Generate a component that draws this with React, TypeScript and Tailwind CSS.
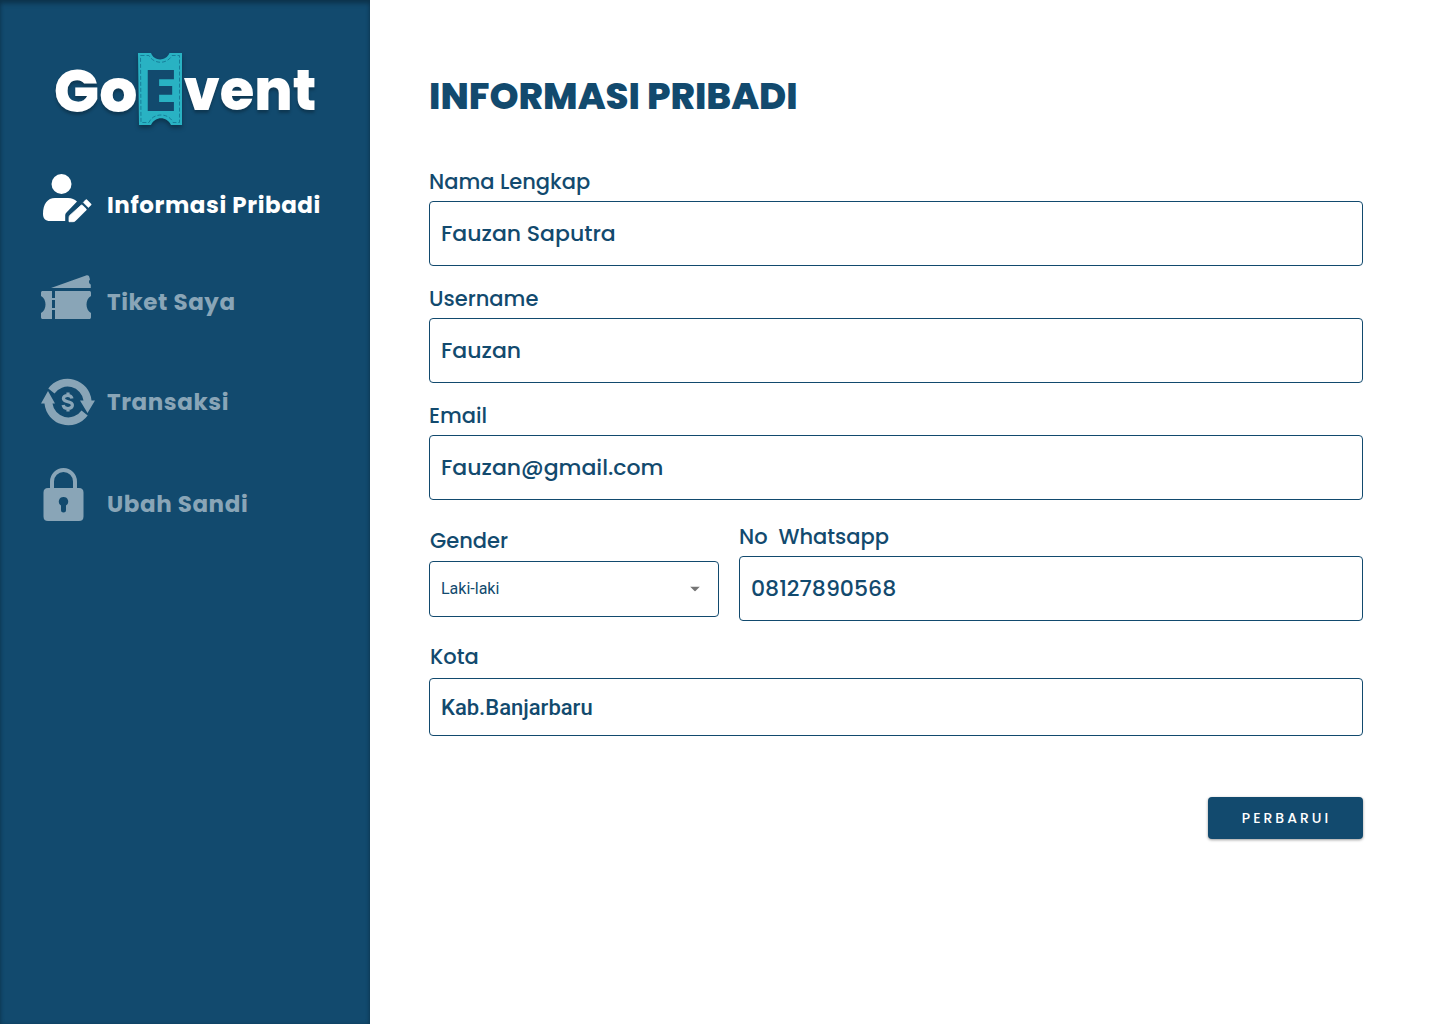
import type { ReactNode } from "react";

const fieldClass =
  "w-full rounded border border-[#124a6e] bg-white px-[11px] text-[22px] font-medium text-[#124a6e] outline-none";
const labelClass = "block text-[21px] font-medium whitespace-pre";

function Logo() {
  return (
    <a href="#" aria-label="GoEvent" className="mx-auto flex h-[76px] w-fit items-center leading-none font-extrabold text-white [text-shadow:0_3px_3px_rgba(0,0,0,0.25)]">
      <span className="pt-1 text-[60px]">Go</span>
      <span className="relative flex h-[76px] w-[46px] items-center justify-center">
        <svg viewBox="0 0 46 76" className="absolute inset-0 h-full w-full overflow-visible drop-shadow-[0_3px_2px_rgba(0,0,0,0.3)]" fill="none">
          <path d="M1 2h13c3 8.500 15 8.500 18.500 0H45v72H34c-4-9-16-9-20 0H2z" fill="#29b2c3" />
          <path d="M3.500 4.500H12c5 9 18 9 23 0h7.500V71.500H36c-4-10-20-10-24 0H4z" stroke="#167f9a" strokeDasharray="4 2" />
        </svg>
        <span className="relative pt-1 text-[58px] text-[#124a6e] [text-shadow:none]">E</span>
      </span>
      <span className="pt-1 text-[56px]">vent</span>
    </a>
  );
}

function UserEditIcon() {
  return (
    <svg width="54" height="50" viewBox="0 0 54 50" fill="currentColor" aria-hidden="true">
      <circle cx="21.500" cy="11" r="10" />
      <path d="M15 25h13c4 0 6.500 1.200 9 3.500L26.500 39.500c-1 1-1.300 1.800-1.300 3.500v5H10c-4.500 0-7-2.500-7-7C3 31 7.500 25 15 25z" />
      <path d="M41 32.300q.7-.6 1.400 0l3.600 3.500q.6.700 0 1.400L35.500 47.700q-1 1-2.500 1h-4v-4q0-1.500 1-2.500z" stroke="currentColor" strokeWidth=".8" />
      <path d="M43.300 29.500 45.500 27q.8-.8 1.600 0l3.700 3.700q.8.800 0 1.600L48.300 34.500z" stroke="currentColor" strokeWidth=".6" />
    </svg>
  );
}

function TicketIcon() {
  return (
    <svg width="54" height="45" viewBox="0 0 54 45" fill="currentColor" aria-hidden="true">
      <path d="M11 13 46 .5c2-.8 3 .2 3.300 1.500l.7 2.500c-1.500 1.500-1.500 3.500.8 5V13z" />
      <path d="M15 16h34c1.500 0 2 .5 2 2v3c-6 3-6 14 0 17v4c0 1.500-.5 2-2 2H15z" />
      <path d="M3 16h9v7h3v2h-3v8h3v2h-3v9H3c-1.500 0-2-.5-2-2v-4c6-3 6-14 0-17v-3c0-1.500.5-2 2-2z" />
    </svg>
  );
}

function TransactionIcon() {
  return (
    <svg width="56" height="50" viewBox="0 0 56 50" fill="currentColor" aria-hidden="true">
      <path d="M8.300 11.500A24 24 0 0 1 51.500 23.500H55L47.500 36 40 23.500h3.500A16 16 0 0 0 14.500 16.500z" />
      <path d="M47.700 38.500A24 24 0 0 1 4.500 26.500H1L8 14l7 12.500h-2.500A16 16 0 0 0 41.500 33.500z" />
      <path d="M32 21.500c-.5-2.300-2-3-4.300-3-2.700 0-4.300 1.200-4.300 3.100 0 4.400 9 2 9 6.500 0 2.200-1.900 3.400-4.600 3.400-2.600 0-4.300-1.100-4.700-3.500M28 15.500v3M28 31v3.500" fill="none" stroke="currentColor" strokeWidth="3.200" />
    </svg>
  );
}

function LockIcon() {
  return (
    <svg width="54" height="54" viewBox="0 0 54 54" fill="currentColor" aria-hidden="true">
      <path d="M12 21V13.500a11.500 11.500 0 0 1 23 0V21" fill="none" stroke="currentColor" strokeWidth="4" />
      <path fillRule="evenodd" d="M8 20h31q4.500 0 4.500 4.500v24Q43.500 53 39 53H8q-4.500 0-4.500-4.500v-24Q3.500 20 8 20zm15.500 9a4.600 4.600 0 0 0-2.500 8.500V42a2.500 2.500 0 0 0 5 0v-4.500a4.600 4.600 0 0 0-2.500-8.500z" />
    </svg>
  );
}

function NavItem({ icon, label, className }: { icon: ReactNode; label: string; className: string }) {
  return (
    <a href="#" className={`flex ${className}`}>
      <span className="w-[67px] shrink-0">{icon}</span>
      <span className="text-[23px] leading-9 font-bold tracking-wide">{label}</span>
    </a>
  );
}

export default function App() {
  return (
    <div className="flex min-h-screen bg-white font-['Poppins','Inter',sans-serif] text-[#124a6e] [&_svg]:block">
      <aside className="w-[370px] shrink-0 bg-[#124a6e] pt-[51px] shadow-[inset_0_4px_4px_rgba(0,0,0,0.25),inset_0_0_4px_rgba(0,0,0,0.15)]">
        <Logo />
        <nav className="mt-[46px] pl-10">
          <NavItem icon={<UserEditIcon />} label="Informasi Pribadi" className="items-end text-white" />
          <NavItem icon={<TicketIcon />} label="Tiket Saya" className="mt-[52px] items-end text-[#89a5b7]" />
          <NavItem icon={<TransactionIcon />} label="Transaksi" className="mt-[57px] items-center text-[#89a5b7]" />
          <NavItem icon={<LockIcon />} label="Ubah Sandi" className="mt-[41px] items-end text-[#89a5b7]" />
        </nav>
      </aside>

      <main className="min-w-0 flex-1 pt-[76px] pr-[77px] pl-[59px]">
        <h1 className="text-[37px] leading-10 font-extrabold">INFORMASI PRIBADI</h1>
        <form className="mt-[53px]" onSubmit={(e) => e.preventDefault()}>
          <div className="flex flex-col gap-5">
            <div>
              <label htmlFor="name" className={`mb-1.5 leading-[26px] ${labelClass}`}>Nama Lengkap</label>
              <input id="name" defaultValue="Fauzan Saputra" className={`h-[65px] ${fieldClass}`} />
            </div>
            <div>
              <label htmlFor="username" className={`mb-1.5 leading-[26px] ${labelClass}`}>Username</label>
              <input id="username" defaultValue="Fauzan" className={`h-[65px] ${fieldClass}`} />
            </div>
            <div>
              <label htmlFor="email" className={`mb-1.5 leading-[26px] ${labelClass}`}>Email</label>
              <input id="email" type="email" defaultValue="Fauzan@gmail.com" className={`h-[65px] ${fieldClass}`} />
            </div>
          </div>

          <div className="mt-6 flex items-end gap-5">
            <div className="w-[290px] pb-1">
              <label htmlFor="gender" className={`mb-2 pl-px leading-6 ${labelClass}`}>Gender</label>
              <div className="relative">
                <select id="gender" className="h-14 w-full appearance-none rounded border border-[#124a6e] bg-white px-[11px] font-['Roboto',sans-serif] text-base outline-none">
                  <option>Laki-laki</option>
                  <option>Perempuan</option>
                </select>
                <svg className="pointer-events-none absolute top-1/2 right-[19px] -translate-y-1/2" width="10" height="5" viewBox="0 0 10 5" fill="#757575" aria-hidden="true">
                  <path d="M0 0h10L5 5z" />
                </svg>
              </div>
            </div>
            <div className="min-w-0 flex-1">
              <label htmlFor="phone" className={`mb-1.5 leading-[26px] ${labelClass}`}>{"No  Whatsapp"}</label>
              <input id="phone" type="tel" defaultValue="08127890568" className={`h-[65px] ${fieldClass}`} />
            </div>
          </div>

          <div className="mt-[23px]">
            <label htmlFor="city" className={`mb-2 pl-px leading-[26px] ${labelClass}`}>Kota</label>
            <input id="city" defaultValue="Kab.Banjarbaru" className={`h-[58px] font-['Roboto',sans-serif] ${fieldClass}`} />
          </div>

          <div className="mt-[61px] flex justify-end">
            <button type="submit" className="h-[42px] w-[155px] rounded bg-[#124a6e] pl-0.5 text-sm font-medium tracking-[3px] text-white shadow-[0_1px_3px_rgba(0,0,0,0.4)]">
              PERBARUI
            </button>
          </div>
        </form>
      </main>
    </div>
  );
}
